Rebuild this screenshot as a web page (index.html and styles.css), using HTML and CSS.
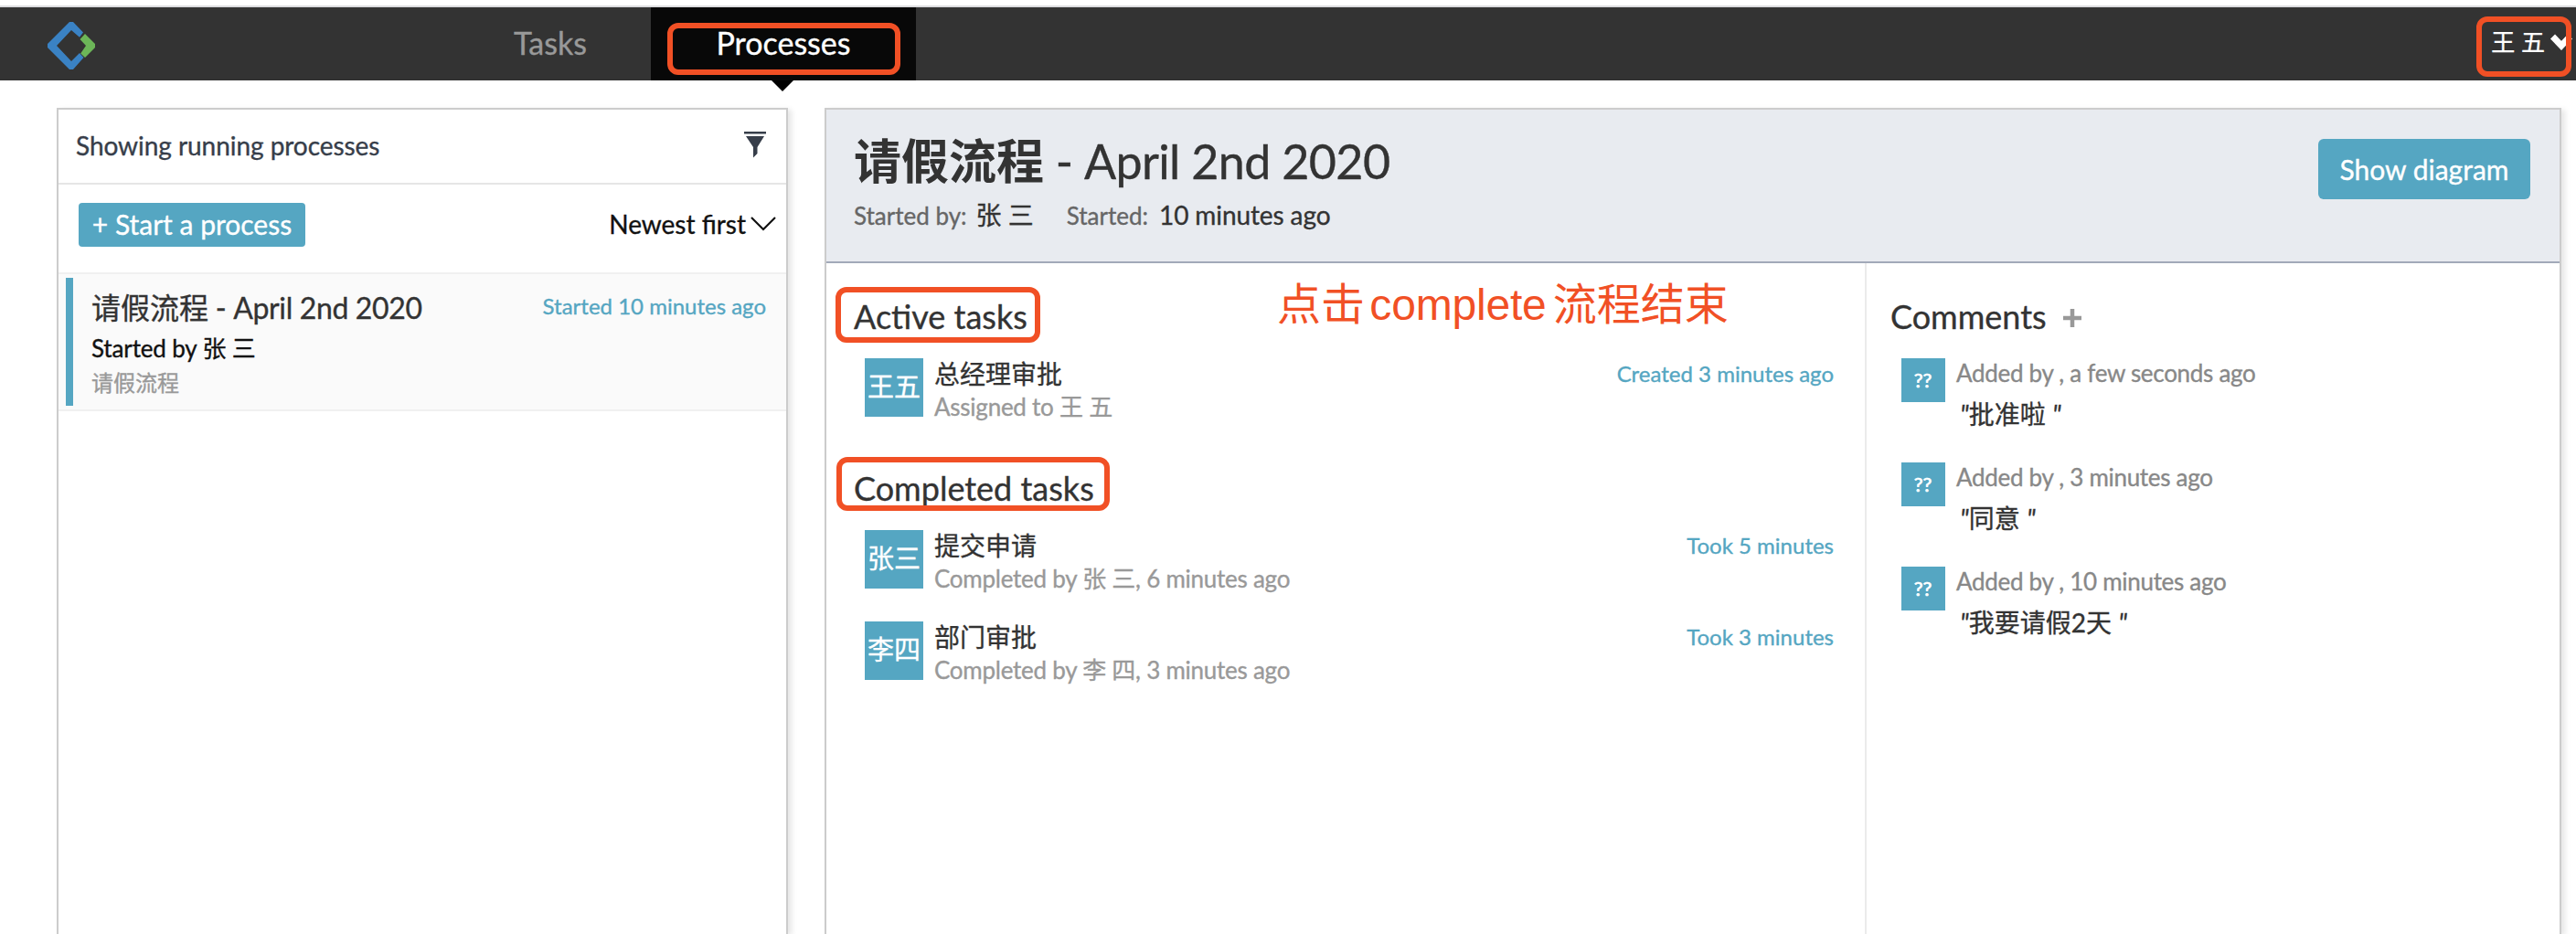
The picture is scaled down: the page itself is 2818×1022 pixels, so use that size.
FILE: index.html
```html
<!DOCTYPE html>
<html lang="zh-CN">
<head>
<meta charset="utf-8">
<title>Processes</title>
<link rel="stylesheet" href="styles.css">
</head>
<body>
<header class="navbar">
  <svg class="logo" viewBox="0 0 52 52">
    <path d="M24 0h4l11 11.500-4 5.200L26 9 10 26l16 17 9-9 4.500 5L28 52h-4L0 28v-4z" fill="#3a82c4"/>
    <path d="M41 13l11 11v4L41 39l-4.800-4.500L42 26l-6.500-7z" fill="#6cb658"/>
  </svg>
  <nav class="tabs">
    <a class="tab"><span>Tasks</span></a>
    <a class="tab tab-active"><span>Processes</span></a>
  </nav>
  <div class="user"><span>王 五</span>
    <svg class="user-caret" viewBox="0 0 24 18"><path d="M2.500 3 12 13 21.500 3" fill="none" stroke="#fff" stroke-width="7"/></svg>
  </div>
</header>
<main class="main">
  <section class="panel list-panel">
    <div class="list-header"><span>Showing running processes</span>
      <svg class="filter" viewBox="0 0 24 30"><path d="M0 1h24v2.500H0zM2 6h20l-7.500 12v7L10 29.500V18z" fill="#373e4a"/></svg>
    </div>
    <div class="toolbar">
      <button class="btn btn-start"><span>+ Start a process</span></button>
      <div class="sort"><span>Newest first</span>
        <svg class="sort-caret" viewBox="0 0 28 16"><path d="M1 1 14 14 27 1" fill="none" stroke="#111" stroke-width="2.200"/></svg>
      </div>
    </div>
    <article class="item">
      <div class="item-bar"></div>
      <div class="item-body">
        <div class="item-top"><span class="item-title">请假流程<span class="item-date"> - April 2nd 2020</span></span><span class="item-time">Started 10 minutes ago</span></div>
        <div class="item-by"><span>Started by 张 三</span></div>
        <div class="item-def"><span>请假流程</span></div>
      </div>
    </article>
  </section>
  <section class="panel detail-panel">
    <div class="detail-header">
      <div>
        <h1 class="title"><b>请假流程</b><span> - April 2nd 2020</span></h1>
        <div class="meta"><span class="meta-label">Started by:</span><span class="meta-who">张 三</span><span class="meta-label">Started:</span><span class="meta-ago">10 minutes ago</span></div>
      </div>
      <button class="btn btn-diagram"><span>Show diagram</span></button>
    </div>
    <div class="columns">
      <div class="tasks">
        <h2 class="heading"><span>Active tasks</span></h2>
        <div class="task">
          <div class="avatar"><span>王五</span></div>
          <div class="task-text"><div class="task-name">总经理审批</div><div class="task-sub"><span>Assigned to 王 五</span></div></div>
          <span class="task-time">Created 3 minutes ago</span>
        </div>
        <h2 class="heading heading-next"><span>Completed tasks</span></h2>
        <div class="task">
          <div class="avatar"><span>张三</span></div>
          <div class="task-text"><div class="task-name">提交申请</div><div class="task-sub"><span>Completed by 张 三, 6 minutes ago</span></div></div>
          <span class="task-time">Took 5 minutes</span>
        </div>
        <div class="task">
          <div class="avatar"><span>李四</span></div>
          <div class="task-text"><div class="task-name">部门审批</div><div class="task-sub"><span>Completed by 李 四, 3 minutes ago</span></div></div>
          <span class="task-time">Took 3 minutes</span>
        </div>
      </div>
      <div class="comments">
        <h2 class="heading"><span>Comments</span><svg class="plus" viewBox="0 0 20 20"><path d="M0 10h20M10 0v20" stroke="#999" stroke-width="4.500"/></svg></h2>
        <div class="comment"><div class="avatar-small">??</div><div><div class="comment-meta"><span>Added by , a few seconds ago</span></div><div class="comment-text"><i>"</i>批准啦 <i>"</i></div></div></div>
        <div class="comment"><div class="avatar-small">??</div><div><div class="comment-meta"><span>Added by , 3 minutes ago</span></div><div class="comment-text"><i>"</i>同意 <i>"</i></div></div></div>
        <div class="comment"><div class="avatar-small">??</div><div><div class="comment-meta"><span>Added by , 10 minutes ago</span></div><div class="comment-text"><i>"</i>我要请假2天 <i>"</i></div></div></div>
      </div>
    </div>
  </section>
</main>
<div class="mark mark-tab"></div>
<div class="mark mark-user"></div>
<div class="mark mark-active"></div>
<div class="mark mark-completed"></div>
<div class="note">点击 <span>complete</span> 流程结束</div>
</body>
</html>
```
FILE: styles.css
```css
* { box-sizing: border-box; }
html, body { margin: 0; height: 1022px; overflow: hidden; }
body {
  position: relative;
  display: flex;
  flex-direction: column;
  padding-top: 6px;
  background: #fff;
  color: #333;
  font-family: Lato, "Noto Sans CJK SC", sans-serif;
  font-size: 28px;
  -webkit-text-stroke: 0.35px currentColor;
}
h1, h2 { margin: 0; font-weight: 400; }
button { border: 0; font: inherit; white-space: nowrap; }
svg { display: block; flex: none; }
span { white-space: pre; }

.navbar { display: flex; flex: none; height: 82px; border-top: 2px solid #dcdcdf; background: #333; }
.logo { width: 52px; height: 52px; margin: 16px 0 0 52px; }
.tabs { display: flex; margin-left: 386px; }
.tab { width: 222px; padding-left: 2px; line-height: 78px; text-align: center; font-size: 34px; color: #999; }
.tab-active { position: relative; width: 290px; padding: 0; background: #080808; color: #fff; }
.tab-active::after {
  content: "";
  position: absolute;
  left: 132px;
  top: 80px;
  border: 12px solid transparent;
  border-top-color: #000;
  border-bottom: 0;
}
.user { display: flex; margin-left: auto; padding-right: 4px; color: #fff; font-size: 26px; line-height: 77px; }
.user-caret { width: 24px; height: 18px; margin: 29px 0 0 6px; }

.main { display: flex; flex: 1; gap: 40px; margin-top: 30px; padding: 0 16px 0 62px; }
.panel { border: 2px solid #ccc; border-bottom: 0; box-shadow: 4px 2px 6px rgba(0, 0, 0, 0.1); }
.list-panel { width: 800px; }
.detail-panel { display: flex; flex-direction: column; flex: 1; }

.list-header {
  display: flex;
  justify-content: space-between;
  height: 82px;
  padding: 0 22px 0 19px;
  border-bottom: 2px solid #e6e6e6;
  line-height: 79px;
  letter-spacing: -0.05px;
  color: #373e4a;
}
.filter { width: 24px; height: 30px; margin-top: 23px; }
.toolbar { display: flex; justify-content: space-between; height: 96px; padding: 20px 11px 0 22px; }
.btn { background: #55a6c2; color: #fff; padding: 0; border-radius: 6px; }
.btn-start { width: 248px; height: 48px; padding-bottom: 3px; border-radius: 4px; font-size: 30px; line-height: 44px; }
.sort { display: flex; color: #111; line-height: 47px; }
.sort-caret { width: 28px; height: 16px; margin: 15px 0 0 5px; }
.item { display: flex; height: 152px; padding: 4px 22px 4px 8px; border: solid #f0f0f0; border-width: 2px 0; background: #fafafa; }
.item-bar { width: 8px; background: #55a6c2; }
.item-body { flex: 1; padding-left: 20px; }
.item-top { display: flex; justify-content: space-between; }
.item-title { font-size: 32px; line-height: 65px; }
.item-date { letter-spacing: -0.35px; }
.item-time { font-size: 24px; line-height: 61px; color: #55a6c2; }
.item-by { font-size: 26px; line-height: 24px; letter-spacing: -0.15px; color: #111; }
.item-def { font-size: 24px; line-height: 52px; color: #999; }

.detail-header { display: flex; justify-content: space-between; height: 168px; padding: 0 32px 0 30px; border-bottom: 2px solid #a2a9b9; background: #e8ebf0; }
.title { height: 112px; font-size: 52px; line-height: 112px; white-space: pre; }
.title b { font-weight: 700; -webkit-text-stroke: 0; }
.title span { letter-spacing: -0.65px; }
.meta { display: flex; line-height: 7px; }
.meta-label { font-size: 26px; line-height: 8px; color: #666; }
.meta-who { margin: 0 36px 0 10px; }
.meta-ago { margin-left: 12px; letter-spacing: -0.1px; }
.btn-diagram { width: 232px; height: 66px; margin-top: 32px; padding-bottom: 1px; font-size: 30px; }

.columns { display: flex; flex: 1; }
.tasks { width: 1138px; border-right: 2px solid #ebebeb; padding: 0 34px 0 30px; }
.heading { display: flex; height: 104px; font-size: 36px; line-height: 116px; }
.heading-next { height: 88px; line-height: 84px; }
.task { display: flex; height: 100px; padding-left: 12px; }
.avatar { width: 64px; height: 64px; background: #55a6c2; color: #fff; font-size: 29px; line-height: 62px; text-align: center; }
.task-text { flex: 1; padding-left: 12px; }
.task-name { font-size: 28px; line-height: 34px; }
.task-sub { font-size: 26px; line-height: 38px; letter-spacing: -0.25px; color: #999; }
.task-time { font-size: 24px; line-height: 34px; color: #55a6c2; }

.comments { padding-left: 26px; }
.plus { width: 20px; height: 20px; margin: 50px 0 0 18px; }
.comment { display: flex; height: 114px; padding-left: 12px; }
.avatar-small { width: 48px; height: 48px; margin-right: 12px; padding-right: 1px; background: #55a6c2; color: #fff; font-size: 22px; line-height: 47px; text-align: center; -webkit-text-stroke-width: 0.7px; }
.comment-meta { font-size: 26px; line-height: 32px; letter-spacing: -0.3px; color: #888; }
.comment-text { padding-left: 4px; line-height: 59px; white-space: pre; }

.mark { position: absolute; border: 6px solid #f15025; border-radius: 12px; }
.mark-tab { left: 730px; top: 25px; width: 255px; height: 57px; }
.mark-user { left: 2709px; top: 18px; width: 104px; height: 66px; }
.mark-active { left: 914px; top: 314px; width: 224px; height: 61px; }
.mark-completed { left: 915px; top: 500px; width: 299px; height: 59px; }
.note {
  position: absolute;
  left: 1397px;
  top: 302px;
  font: 48px/64px "Liberation Sans", "Noto Sans CJK SC", sans-serif;
  word-spacing: -8px;
  color: #f15025;
  white-space: pre;
  -webkit-text-stroke: 0;
}
.note span { margin-right: 2px; letter-spacing: -0.2px; }
```
